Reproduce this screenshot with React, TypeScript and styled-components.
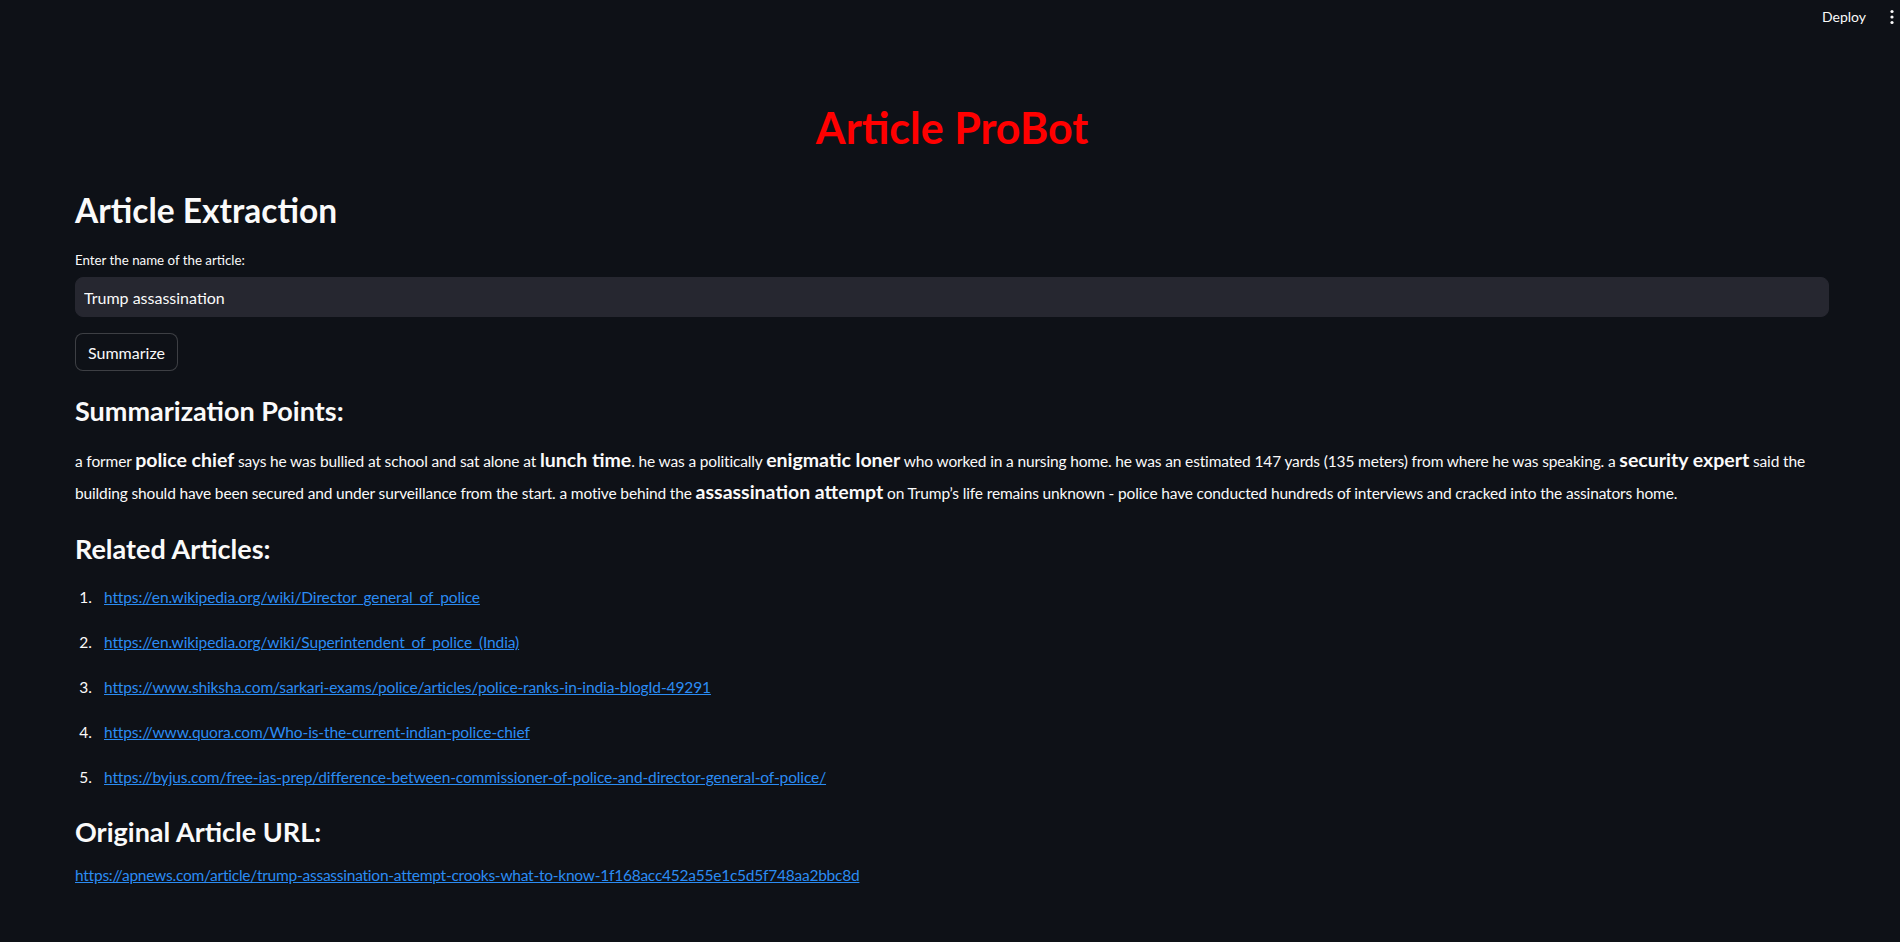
import React from "react";
import styled, { createGlobalStyle } from "styled-components";

const GlobalStyle = createGlobalStyle`
  html, body {
    margin: 0;
    padding: 0;
    background: #0e1117;
    color: #fafafa;
    font-family: "Lato", "Noto Sans", sans-serif;
  }
  * { box-sizing: border-box; }
`;

const Page = styled.div`
  min-height: 942px;
  background: #0e1117;
  display: flex;
  flex-direction: column;
`;

const Header = styled.header`
  height: 60px;
  display: flex;
  justify-content: flex-end;
  align-items: flex-start;
`;

const Toolbar = styled.div`
  height: 33px;
  display: flex;
  align-items: center;
  gap: 18px;
`;

const DeployButton = styled.button`
  background: transparent;
  border: none;
  color: #fafafa;
  font-family: inherit;
  font-size: 14px;
  line-height: 32px;
  padding: 0;
  cursor: pointer;
`;

const MenuButton = styled.button`
  width: 16px;
  height: 32px;
  background: transparent;
  border: none;
  padding: 0;
  display: flex;
  align-items: center;
  justify-content: center;
  color: #fafafa;
`;

const Main = styled.main`
  padding: 0 71px 80px 75px;
  display: flex;
  flex-direction: column;
`;

const Title = styled.h1`
  margin: 42px 0 0;
  text-align: center;
  color: #ff0000;
  font-size: 43px;
  line-height: 52.8px;
  font-weight: 700;
`;

const Header2 = styled.h2`
  margin: 34px 0 0;
  font-size: 33.5px;
  line-height: 43.2px;
  font-weight: 700;
`;

const Label = styled.label`
  margin-top: 18px;
  font-size: 13.3px;
  line-height: 20px;
`;

const Input = styled.input`
  margin-top: 7px;
  height: 40px;
  width: 100%;
  background: #262730;
  border: 1px solid #262730;
  border-radius: 8px;
  color: #fafafa;
  font-family: inherit;
  font-size: 16px;
  padding: 0 8px;
  outline: none;
`;

const Button = styled.button`
  margin-top: 16px;
  align-self: flex-start;
  height: 38px;
  padding: 0 12px;
  background: #0e1117;
  color: #fafafa;
  border: 1px solid rgba(250, 250, 250, 0.2);
  border-radius: 8px;
  font-family: inherit;
  font-size: 16px;
`;

const Header3 = styled.h3<{ $gap: number }>`
  margin: ${(p) => p.$gap}px 0 0;
  font-size: 27px;
  line-height: 33.6px;
  font-weight: 700;
`;

const Paragraph = styled.p`
  margin: 17px 0 0;
  font-size: 15.5px;
  letter-spacing: -0.15px;
  line-height: 32px;
`;

const Key = styled.span`
  font-size: 19.5px;
  line-height: 1;
  letter-spacing: 0;
  font-weight: 700;
`;

const List = styled.ol`
  margin: 20px 0 0;
  padding: 0;
  list-style: none;
  display: flex;
  flex-direction: column;
  gap: 19.4px;
`;

const Item = styled.li`
  display: flex;
  font-size: 15.5px;
  line-height: 25.6px;
`;

const Marker = styled.span`
  width: 17px;
  text-align: right;
  margin-right: 12px;
  flex: none;
`;

const Link = styled.a<{ $spacing?: number }>`
  color: #2b8cf3;
  text-decoration: underline;
  font-size: 15.5px;
  letter-spacing: ${(p) => p.$spacing ?? -0.12}px;
  line-height: 25.6px;
`;

const UrlLine = styled.div`
  margin-top: 15px;
  font-size: 15.5px;
  line-height: 25.6px;
`;

const related = [
  "https://en.wikipedia.org/wiki/Director_general_of_police",
  "https://en.wikipedia.org/wiki/Superintendent_of_police_(India)",
  "https://www.shiksha.com/sarkari-exams/police/articles/police-ranks-in-india-blogId-49291",
  "https://www.quora.com/Who-is-the-current-indian-police-chief",
  "https://byjus.com/free-ias-prep/difference-between-commissioner-of-police-and-director-general-of-police/",
];

const original =
  "https://apnews.com/article/trump-assassination-attempt-crooks-what-to-know-1f168acc452a55e1c5d5f748aa2bbc8d";

export default function App() {
  return (
    <Page>
      <GlobalStyle />
      <Header>
        <Toolbar>
          <DeployButton>Deploy</DeployButton>
          <MenuButton aria-label="menu">
            <svg width="4" height="16" viewBox="0 0 4 16" fill="currentColor">
              <circle cx="2" cy="2.5" r="1.6" />
              <circle cx="2" cy="8" r="1.6" />
              <circle cx="2" cy="13.5" r="1.6" />
            </svg>
          </MenuButton>
        </Toolbar>
      </Header>
      <Main>
        <Title>Article ProBot</Title>
        <Header2>Article Extraction</Header2>
        <Label>Enter the name of the article:</Label>
        <Input defaultValue="Trump assassination" />
        <Button>Summarize</Button>
        <Header3 $gap={23}>Summarization Points:</Header3>
        <Paragraph>
          a former <Key>police chief</Key> says he was bullied at school and sat alone at{" "}
          <Key>lunch time</Key>. he was a politically <Key>enigmatic loner</Key> who worked in a
          nursing home. he was an estimated 147 yards (135 meters) from where he was speaking. a{" "}
          <Key>security expert</Key> said the building should have been secured and under
          surveillance from the start. a motive behind the <Key>assassination attempt</Key> on
          Trump’s life remains unknown - police have conducted hundreds of interviews and cracked
          into the assinators home.
        </Paragraph>
        <Header3 $gap={23}>Related Articles:</Header3>
        <List>
          {related.map((url, i) => (
            <Item key={url}>
              <Marker>{i + 1}.</Marker>
              <Link href={url}>{url}</Link>
            </Item>
          ))}
        </List>
        <Header3 $gap={24}>Original Article URL:</Header3>
        <UrlLine>
          <Link href={original} $spacing={-0.24}>
            {original}
          </Link>
        </UrlLine>
      </Main>
    </Page>
  );
}
